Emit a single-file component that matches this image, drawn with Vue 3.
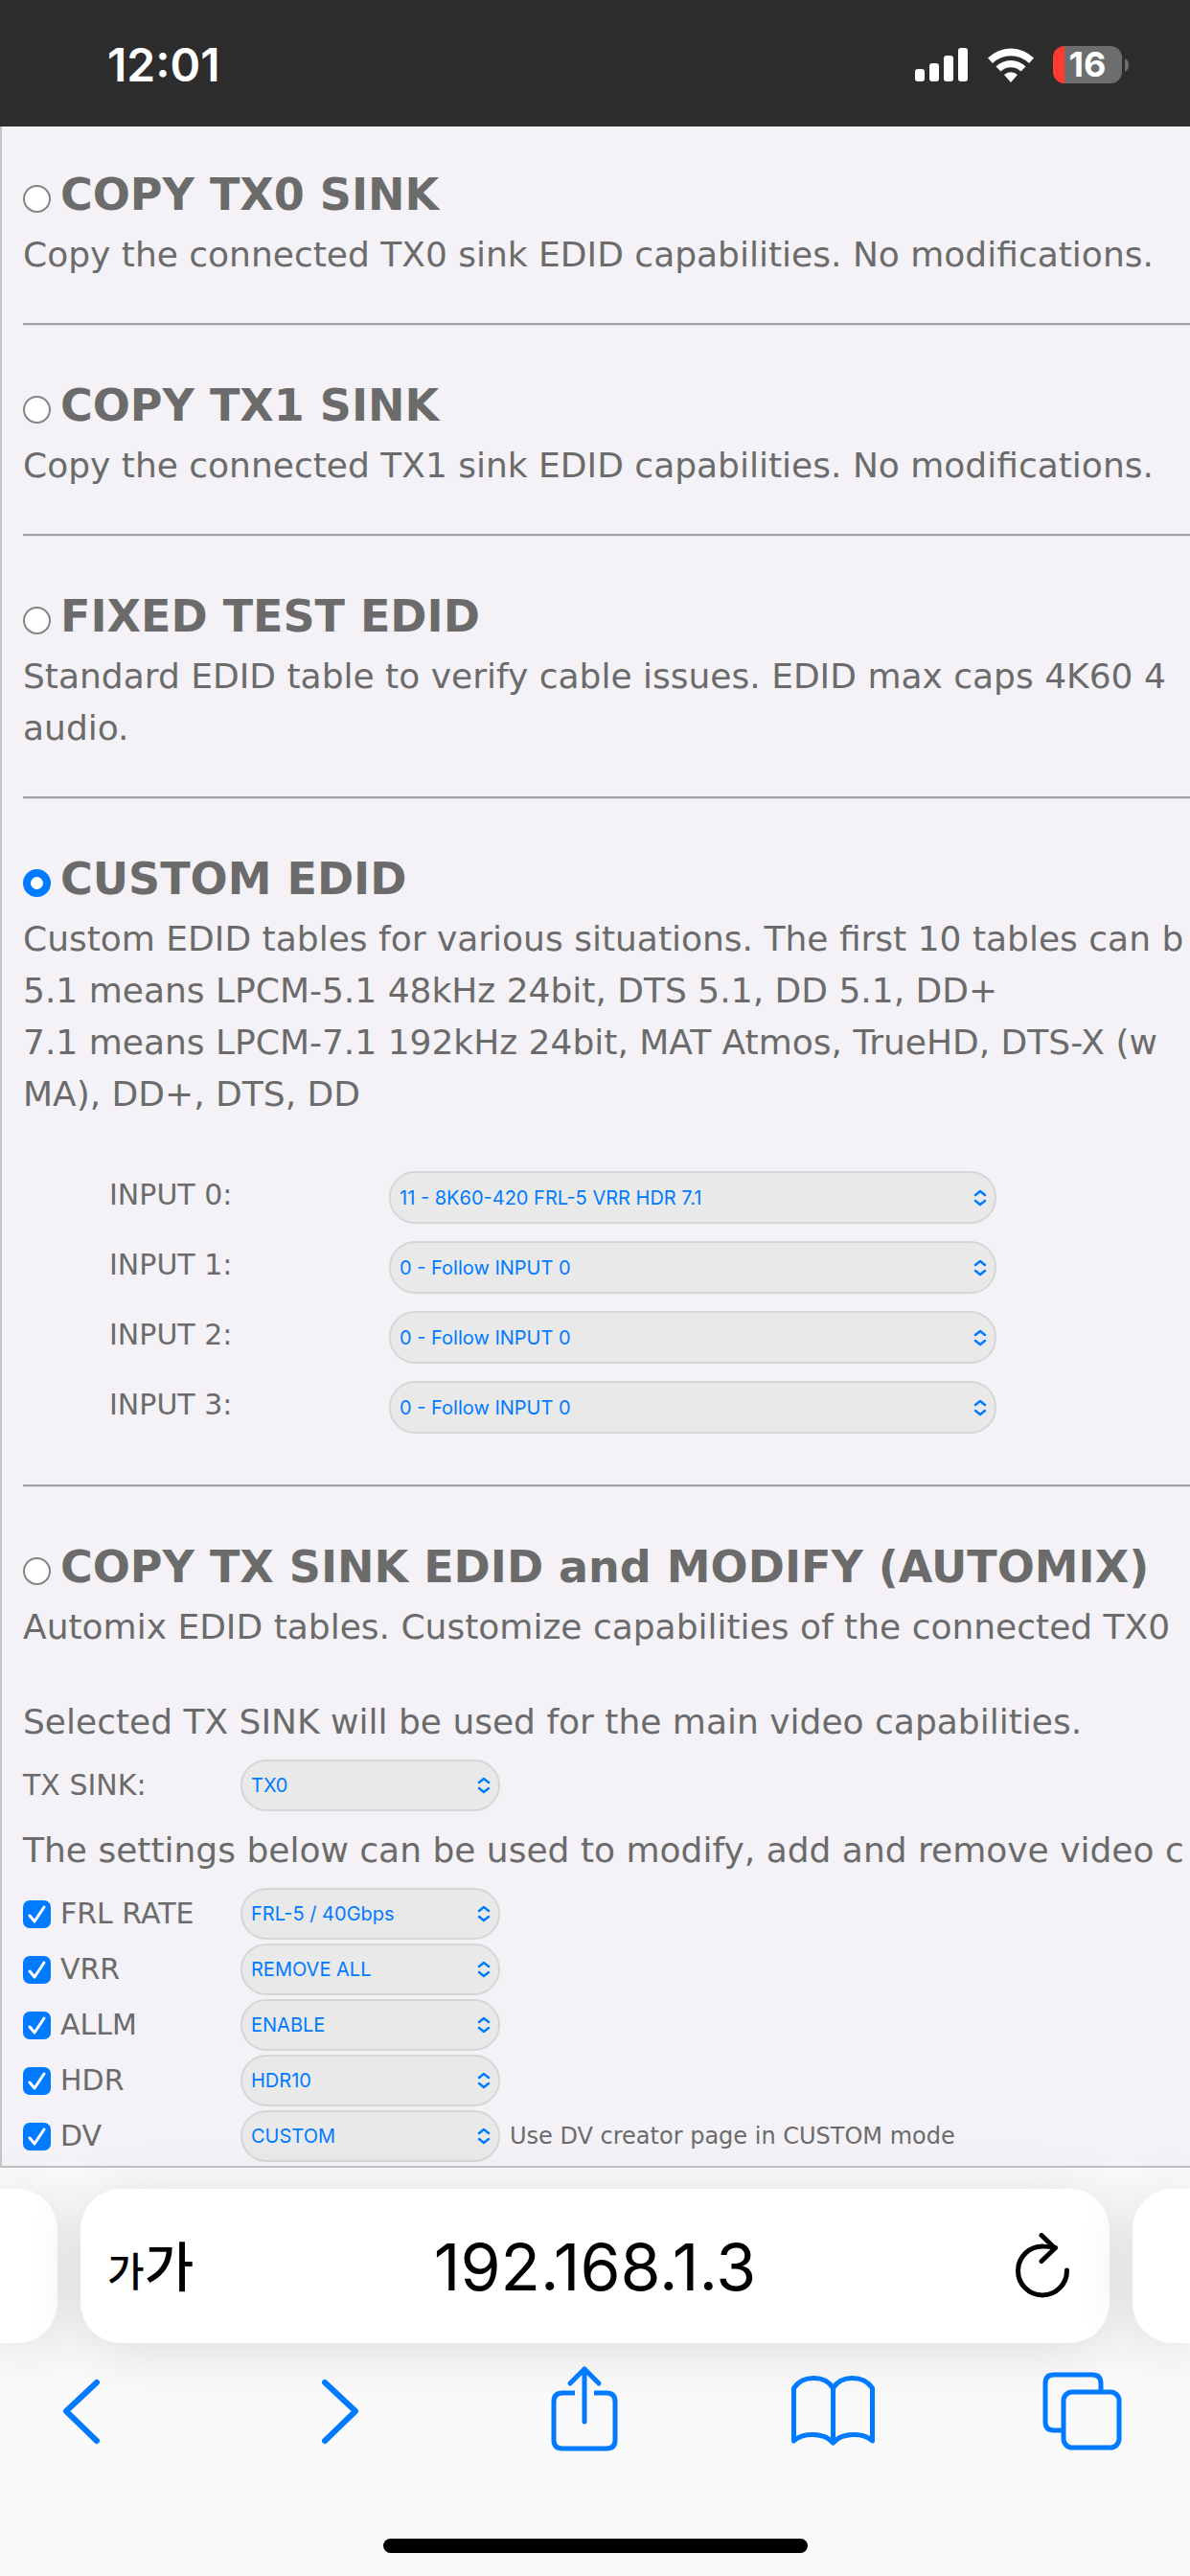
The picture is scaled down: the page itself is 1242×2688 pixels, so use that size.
<script setup>
import { reactive, ref } from 'vue'

const mode = ref('custom')
const address = ref('192.168.1.3')

const simpleModes = [
  { id: 'tx0', title: 'COPY TX0 SINK', lines: ['Copy the connected TX0 sink EDID capabilities. No modifications.'] },
  { id: 'tx1', title: 'COPY TX1 SINK', lines: ['Copy the connected TX1 sink EDID capabilities. No modifications.'] },
  { id: 'fixed', title: 'FIXED TEST EDID', lines: ['Standard EDID table to verify cable issues. EDID max caps 4K60 4', 'audio.'] },
]

const customLines = [
  'Custom EDID tables for various situations. The first 10 tables can b',
  '5.1 means LPCM-5.1 48kHz 24bit, DTS 5.1, DD 5.1, DD+',
  '7.1 means LPCM-7.1 192kHz 24bit, MAT Atmos, TrueHD, DTS-X (w',
  'MA), DD+, DTS, DD',
]

const inputs = [
  { id: 'input0', label: 'INPUT 0:', value: '11 - 8K60-420 FRL-5 VRR HDR 7.1' },
  { id: 'input1', label: 'INPUT 1:', value: '0 - Follow INPUT 0' },
  { id: 'input2', label: 'INPUT 2:', value: '0 - Follow INPUT 0' },
  { id: 'input3', label: 'INPUT 3:', value: '0 - Follow INPUT 0' },
]

const overrides = reactive([
  { id: 'frl', label: 'FRL RATE', value: 'FRL-5 / 40Gbps', on: true },
  { id: 'vrr', label: 'VRR', value: 'REMOVE ALL', on: true },
  { id: 'allm', label: 'ALLM', value: 'ENABLE', on: true },
  { id: 'hdr', label: 'HDR', value: 'HDR10', on: true },
  { id: 'dv', label: 'DV', value: 'CUSTOM', on: true, note: 'Use DV creator page in CUSTOM mode' },
])
</script>

<template>
  <div class="screen">
    <header class="status">
      <time class="clock">12:01</time>
      <div class="indicators">
        <svg class="signal" width="56" height="36" viewBox="0 0 56 36" aria-hidden="true">
          <rect x="0" y="22" width="10" height="13" rx="3" />
          <rect x="15" y="16" width="10" height="19" rx="3" />
          <rect x="30" y="8" width="10" height="27" rx="3" />
          <rect x="45" y="0" width="10" height="35" rx="3" />
        </svg>
        <svg class="wifi" width="48" height="36" viewBox="0 0 48 36" aria-hidden="true">
          <path d="M0 10.5A34 34 0 0 1 48 10.5L43 16A27 27 0 0 0 5 16Z" />
          <path d="M8.500 19.500A22 22 0 0 1 39.500 19.500L34.500 24.500A15 15 0 0 0 13.500 24.500Z" />
          <path d="M17 28A10 10 0 0 1 31 28L24 36Z" />
        </svg>
        <div class="battery">
          <span class="cell">16</span>
          <svg width="4" height="14" viewBox="0 0 4 14" aria-hidden="true"><path d="M0 0Q4 2 4 7T0 14Z" /></svg>
        </div>
      </div>
    </header>

    <main class="page">
      <section v-for="m in simpleModes" :key="m.id">
        <h2 class="mode">
          <input :id="m.id" v-model="mode" class="radio" type="radio" name="mode" :value="m.id" />
          <label :for="m.id">{{ m.title }}</label>
        </h2>
        <p class="copy"><span v-for="line in m.lines" :key="line">{{ line }}</span></p>
        <hr />
      </section>

      <section>
        <h2 class="mode">
          <input id="custom" v-model="mode" class="radio" type="radio" name="mode" value="custom" />
          <label for="custom">CUSTOM EDID</label>
        </h2>
        <p class="copy"><span v-for="line in customLines" :key="line">{{ line }}</span></p>
        <div class="inputs">
          <div v-for="i in inputs" :key="i.id" class="input-row">
            <label class="name" :for="i.id">{{ i.label }}</label>
            <select :id="i.id" class="picker"><option>{{ i.value }}</option></select>
          </div>
        </div>
        <hr />
      </section>

      <section>
        <h2 class="mode">
          <input id="automix" v-model="mode" class="radio" type="radio" name="mode" value="automix" />
          <label for="automix">COPY TX SINK EDID and MODIFY (AUTOMIX)</label>
        </h2>
        <p class="copy spaced"><span>Automix EDID tables. Customize capabilities of the connected TX0</span></p>
        <p class="copy"><span>Selected TX SINK will be used for the main video capabilities.</span></p>
        <div class="settings">
          <div class="setting">
            <label class="name" for="sink">TX SINK:</label>
            <select id="sink" class="picker"><option>TX0</option></select>
          </div>
        </div>
        <p class="copy"><span>The settings below can be used to modify, add and remove video c</span></p>
        <div class="settings">
          <div v-for="o in overrides" :key="o.id" class="setting">
            <label class="name">
              <input v-model="o.on" class="check" type="checkbox" />
              {{ o.label }}
            </label>
            <select :id="o.id" class="picker" :aria-label="o.label"><option>{{ o.value }}</option></select>
            <span v-if="o.note" class="note">{{ o.note }}</span>
          </div>
        </div>
      </section>
    </main>

    <footer class="browser">
      <div class="tabs">
        <div class="card peek-left"></div>
        <div class="card address">
          <button class="reader" type="button" aria-label="Page settings"><small>가</small>가</button>
          <input v-model="address" class="url" type="text" aria-label="Address" />
          <button class="reload" type="button" aria-label="Reload">
            <svg width="60" height="70" viewBox="0 0 60 70">
              <path d="M43.500 15.500Q37 14 31 14A25.500 25.500 0 1 0 55.500 39" />
              <path d="M29 2.500L43 16L29 29.500" />
            </svg>
          </button>
        </div>
        <div class="card peek-right"></div>
      </div>

      <nav class="toolbar">
        <button type="button" aria-label="Back">
          <svg viewBox="0 0 88 90"><path class="bold" d="M60 17L28 47L60 78" /></svg>
        </button>
        <button type="button" aria-label="Forward">
          <svg viewBox="0 0 88 90"><path class="bold" d="M37 17L69 47L37 78" /></svg>
        </button>
        <button type="button" aria-label="Share">
          <svg viewBox="0 0 88 90">
            <path class="butt" d="M37 28H24Q15 28 15 37V77Q15 86 24 86H70Q79 86 79 77V37Q79 28 70 28H57" />
            <path d="M47 4V58M32 18L47 3L62 18" />
          </svg>
        </button>
        <button type="button" aria-label="Bookmarks">
          <svg viewBox="0 0 88 90">
            <path d="M4.500 78V23C14 9 37 9 45.500 23C54 9 77 9 86.500 23V78C77 69 55 69 45.500 80C36 69 14 69 4.500 78ZM45.500 23V80" />
          </svg>
        </button>
        <button type="button" aria-label="Tabs">
          <svg viewBox="0 0 88 90">
            <path class="butt" d="M64 25V18Q64 9 55 9H15Q6 9 6 18V58Q6 67 15 67H23" />
            <rect x="25" y="27" width="58" height="58" rx="9" />
          </svg>
        </button>
      </nav>
      <div class="home"></div>
    </footer>
  </div>
</template>

<style>
body {
  margin: 0;
}
</style>

<style scoped>
.screen {
  display: flex;
  flex-direction: column;
  min-height: 100vh;
  overflow: hidden;
  font-family: Verdana, "DejaVu Sans", sans-serif;
  color: #6b6b6b;
  background: #fafafb;
}

.status {
  display: flex;
  justify-content: space-between;
  align-items: center;
  height: 132px;
  padding: 3px 64px 0 112px;
  box-sizing: border-box;
  background: #2d2d2d;
  color: #fff;
  font-family: Inter, sans-serif;
}
.clock {
  font-size: 48px;
  font-weight: 600;
}
.indicators {
  display: flex;
  align-items: center;
  gap: 20px;
}
.signal,
.wifi {
  fill: #fff;
}
.battery {
  display: flex;
  align-items: center;
  gap: 3px;
}
.battery svg {
  fill: #6d6d6d;
}
.cell {
  width: 72px;
  height: 39px;
  border-radius: 12px;
  background: linear-gradient(90deg, #ff3b30 12px, #6d6d6d 12px);
  font-size: 36px;
  font-weight: 700;
  line-height: 39px;
  text-align: center;
}

.page {
  padding: 43px 0 4px 22px;
  border-left: 2px solid #c6c4c7;
  border-bottom: 2px solid #c2c0c3;
  background: #f4f2f6;
  white-space: nowrap;
}
.mode {
  display: flex;
  align-items: flex-end;
  gap: 10px;
  margin: 0 0 8px;
  font-size: 46px;
  line-height: 56px;
  font-weight: 700;
}
.radio {
  appearance: none;
  flex: none;
  width: 29px;
  height: 29px;
  margin: 0 0 9px;
  box-sizing: border-box;
  border: 2px solid #858585;
  border-radius: 50%;
  background: #fff;
}
.radio:checked {
  border: 8px solid #007aff;
}
.copy {
  margin: 0;
  font-size: 36px;
  line-height: 54px;
}
.copy span {
  display: block;
}
.spaced {
  margin-bottom: 45px;
}
hr {
  height: 0;
  margin: 44px 0 55px;
  border: 0;
  border-top: 2px solid #a3a3a3;
  border-bottom: 1px solid #dedede;
}

.inputs {
  display: flex;
  flex-direction: column;
  gap: 18px;
  margin: 53px 0;
  padding-left: 90px;
}
.input-row {
  display: grid;
  grid-template-columns: 292px 634px;
  align-items: start;
}
.name {
  font-size: 30px;
  line-height: 50px;
}
.picker {
  appearance: none;
  width: 100%;
  height: 55px;
  margin: 0;
  padding: 0 32px 0 9px;
  box-sizing: border-box;
  border: 2px solid #d6d6d7;
  border-radius: 27px;
  background: #e9e9ea url("data:image/svg+xml,%3Csvg xmlns='http://www.w3.org/2000/svg' width='14' height='18' fill='none' stroke='%23007aff' stroke-width='2.500' stroke-linecap='round' stroke-linejoin='round'%3E%3Cpath d='M2 6l5-4 5 4M2 12l5 4 5-4'/%3E%3C/svg%3E") no-repeat right 8px center;
  color: #007aff;
  font-family: Inter, sans-serif;
  font-size: 20px;
}

.settings {
  display: flex;
  flex-direction: column;
  gap: 4px;
  margin: 12px 0 0;
}
.settings + .copy {
  margin-top: 14px;
}
.setting {
  display: grid;
  grid-template-columns: 227px 271px auto;
  align-items: center;
}
.setting .picker {
  height: 54px;
}
.setting .name {
  display: flex;
  align-items: center;
  gap: 10px;
}
.check {
  appearance: none;
  width: 29px;
  height: 29px;
  margin: 0;
  border-radius: 7px;
  background: #fff;
}
.check:checked {
  background: #007aff url("data:image/svg+xml,%3Csvg xmlns='http://www.w3.org/2000/svg' width='29' height='29' fill='none' stroke='white' stroke-width='3' stroke-linecap='round' stroke-linejoin='round'%3E%3Cpath d='M7 16l5 6L22 7'/%3E%3C/svg%3E");
}
.note {
  padding-left: 10px;
  font-size: 24px;
}

.browser {
  display: flex;
  flex-direction: column;
  flex: 1;
  padding-top: 22px;
}
.tabs {
  display: grid;
  grid-template-columns: 60px minmax(0, 1fr) 60px;
  gap: 24px;
}
.card {
  height: 161px;
  border-radius: 42px;
  background: #fff;
  box-shadow: 0 8px 60px rgba(0, 0, 0, 0.12);
}
.peek-left {
  border-radius: 0 42px 42px 0;
}
.peek-right {
  border-radius: 42px 0 0 42px;
}
.address {
  display: grid;
  grid-template-columns: 140px minmax(0, 1fr) 140px;
  align-items: center;
}
button {
  padding: 0;
  border: 0;
  background: none;
}
.reader {
  justify-self: start;
  padding-left: 28px;
  font-family: "Noto Sans CJK KR", sans-serif;
  font-size: 56px;
  font-weight: 500;
  line-height: 60px;
  white-space: nowrap;
  color: #000;
}
.reader small {
  font-size: 42px;
}
.url {
  width: 100%;
  padding: 0;
  border: 0;
  background: none;
  color: #000;
  font-family: Inter, sans-serif;
  font-size: 68px;
  text-align: center;
}
.reload svg {
  display: block;
  margin: 0 auto;
}
.reload path {
  fill: none;
  stroke: #000;
  stroke-width: 5;
  stroke-linecap: round;
  stroke-linejoin: round;
}
.toolbar {
  display: flex;
  justify-content: space-between;
  padding: 24px 69px 0 41px;
}
.toolbar svg {
  display: block;
  width: 88px;
  height: 90px;
  overflow: visible;
  fill: none;
  stroke: #007aff;
  stroke-width: 5;
  stroke-linecap: round;
  stroke-linejoin: round;
}
.toolbar .bold {
  stroke-width: 6;
}
.toolbar .butt {
  stroke-linecap: butt;
}
.home {
  align-self: center;
  width: 443px;
  height: 15px;
  margin: auto 0 24px;
  border-radius: 8px;
  background: #000;
}
</style>
